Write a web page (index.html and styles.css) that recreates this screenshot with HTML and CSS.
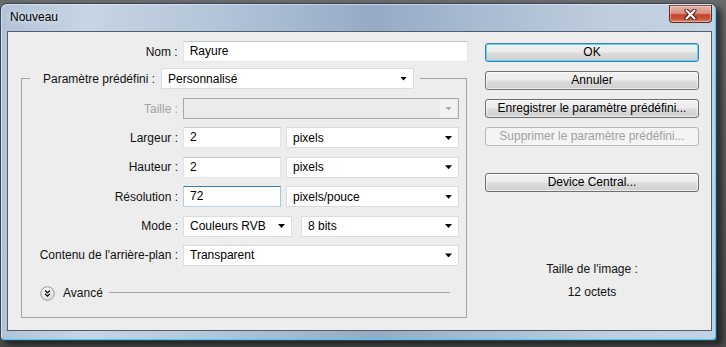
FILE: index.html
```html
<!DOCTYPE html>
<html lang="fr">
<head>
<meta charset="utf-8">
<title>Nouveau</title>
<link rel="stylesheet" href="styles.css">
</head>
<body>
<div class="screen">
  <div class="window">
    <div class="titlebar">
      <span class="title">Nouveau</span>
      <div class="close">
        <svg width="13" height="11" viewBox="0 0 13 11">
          <path d="M2.5 1.5 L10.5 9.5 M10.5 1.5 L2.5 9.5" stroke="#3a1a14" stroke-width="4" stroke-linecap="round"/>
          <path d="M2.5 1.5 L10.5 9.5 M10.5 1.5 L2.5 9.5" stroke="#fff" stroke-width="2.2" stroke-linecap="round"/>
        </svg>
      </div>
    </div>
    <div class="client">
      <div class="left">
        <div class="row nom-row">
          <span class="lbl">Nom :</span>
          <div class="input w-nom">Rayure</div>
        </div>
        <fieldset class="group">
          <legend class="legend">
            <span class="lbl-inline">Paramètre prédéfini :</span>
            <div class="select w-preset"><span>Personnalisé</span><i class="arrow"></i></div>
          </legend>
          <div class="rows">
            <div class="row">
              <span class="lbl disabled">Taille :</span>
              <div class="select disabled-select w-full"><span></span><b class="arrow-box"><i class="arrow grey"></i></b></div>
            </div>
            <div class="row">
              <span class="lbl">Largeur :</span>
              <div class="input w-num">2</div>
              <div class="select w-unit"><span>pixels</span><i class="arrow"></i></div>
            </div>
            <div class="row">
              <span class="lbl">Hauteur :</span>
              <div class="input w-num">2</div>
              <div class="select w-unit"><span>pixels</span><i class="arrow"></i></div>
            </div>
            <div class="row">
              <span class="lbl">Résolution :</span>
              <div class="input focus w-num">72</div>
              <div class="select w-unit"><span>pixels/pouce</span><i class="arrow"></i></div>
            </div>
            <div class="row">
              <span class="lbl">Mode :</span>
              <div class="select w-mode"><span>Couleurs RVB</span><i class="arrow"></i></div>
              <div class="select w-bits"><span>8 bits</span><i class="arrow"></i></div>
            </div>
            <div class="row">
              <span class="lbl">Contenu de l'arrière-plan :</span>
              <div class="select w-full"><span>Transparent</span><i class="arrow"></i></div>
            </div>
          </div>
          <div class="advanced">
            <span class="adv-icon">
              <svg width="15" height="15" viewBox="0 0 15 15">
                <defs>
                  <radialGradient id="g" cx="45%" cy="35%" r="70%">
                    <stop offset="0" stop-color="#ffffff"/>
                    <stop offset="1" stop-color="#d6d6d6"/>
                  </radialGradient>
                </defs>
                <circle cx="7.5" cy="7.5" r="6.8" fill="url(#g)" stroke="#9c9c9c" stroke-width="1"/>
                <path d="M5 4.5 L7.5 6.8 L10 4.5 M5 7.8 L7.5 10.1 L10 7.8" fill="none" stroke="#111" stroke-width="1.3"/>
              </svg>
            </span>
            <span class="adv-text">Avancé</span>
            <span class="adv-line"></span>
          </div>
        </fieldset>
      </div>
      <div class="right">
        <div class="btn default">OK</div>
        <div class="btn">Annuler</div>
        <div class="btn">Enregistrer le paramètre prédéfini...</div>
        <div class="btn btn-disabled">Supprimer le paramètre prédéfini...</div>
        <div class="btn btn-device">Device Central...</div>
        <div class="info">
          <div>Taille de l'image :</div>
          <div>12 octets</div>
        </div>
      </div>
    </div>
  </div>
</div>
</body>
</html>
```
FILE: styles.css
```css
* { box-sizing: border-box; }

body {
  margin: 0;
  width: 726px;
  height: 347px;
  overflow: hidden;
  background: linear-gradient(to bottom, #6b6b6b, #4a4a4a);
  font: 12px "Liberation Sans", Arial, sans-serif;
  color: #000;
}

.screen { padding-top: 3px; }

.window {
  width: 717px;
  height: 338px;
  border: 1px solid #34455a;
  border-radius: 7px 7px 4px 4px;
  background: linear-gradient(to right, #b2c3d7 0%, #c7d5e4 12%, #b3c5d9 30%, #95abc5 52%, #a9bcd2 68%, #bfcede 85%, #c4d2e1 100%);
  box-shadow: inset -1px -1px 0 #3ccff7, inset 1px 1px 0 rgba(255,255,255,0.45), 5px 4px 6px rgba(0,0,0,0.55);
  display: flex;
  flex-direction: column;
}

.titlebar {
  height: 27px;
  display: flex;
  align-items: flex-start;
  padding: 0 4px 0 9px;
}

.title {
  line-height: 27px;
  font-size: 12px;
  color: #000;
  text-shadow: 0 0 6px rgba(255,255,255,0.9);
}

.close {
  margin-left: auto;
  margin-top: 1px;
  width: 43px;
  height: 18px;
  border: 1px solid #5b2d24;
  border-top-color: #7a5048;
  border-radius: 0 0 4px 4px;
  background: linear-gradient(to bottom, #e7b0a3 0%, #d99482 45%, #c3442b 55%, #c9543a 80%, #e08a6e 100%);
  box-shadow: inset 0 0 0 1px rgba(255,255,255,0.35);
  display: flex;
  align-items: center;
  justify-content: center;
}

.client {
  margin: 0 4px 0 6px;
  height: 300px;
  border: 1px solid #4f5e6e;
  background: #ededed;
  display: flex;
  padding-top: 9px;
}

/* left side */
.left {
  margin-left: 13px;
  width: 447px;
  display: flex;
  flex-direction: column;
}

.row {
  display: flex;
  align-items: center;
  height: 21px;
}

.lbl {
  width: 156px;
  margin-right: 5px;
  text-align: right;
  white-space: nowrap;
  color: #111;
}

.nom-row .lbl { width: 157px; }

.lbl.disabled { color: #a3a3a3; }

.input {
  height: 21px;
  background: #fff;
  border: 1px solid;
  border-color: #c5c7cc #e0e3e8 #e5e9ee #e0e3e8;
  padding-left: 6px;
  line-height: 19px;
  white-space: nowrap;
}

.input.focus {
  border-color: #3d7bad #a4c9e3 #b7d9ed #b5cfe7;
}

.select {
  height: 21px;
  background: #fff;
  border: 1px solid #dcdcdc;
  display: flex;
  align-items: center;
  padding-left: 6px;
  white-space: nowrap;
}

.select span { flex: 1; }

.arrow {
  display: block;
  width: 7px;
  height: 4px;
  background: #000;
  clip-path: polygon(0 0, 100% 0, 50% 100%);
  margin-right: 6px;
}

.arrow.grey { background: #a8a8a8; margin: 0; }

.disabled-select {
  background: #ebebeb;
  border-color: #a9a9a9;
  padding-right: 1px;
}

.arrow-box {
  width: 17px;
  height: 17px;
  background: #f2f2f2;
  display: flex;
  align-items: center;
  justify-content: center;
}

.w-nom { width: 286px; }
.w-preset { width: 253px; }
.w-full { width: 276px; }
.w-num { width: 98px; }
.w-unit { width: 173px; margin-left: 5px; }
.w-mode { width: 109px; }
.w-bits { width: 158px; margin-left: 9px; }

.group {
  margin: 6px 0 0 0;
  padding: 0 7px 16px 0;
  width: 446px;
  border: 1px solid #a3a3a3;
  min-width: 0;
}

.legend {
  margin: 0 0 -5px 8px;
  padding: 0 6px 0 13px;
  display: flex;
  align-items: center;
  height: 21px;
}

.lbl-inline { margin-right: 6px; color: #111; }

.rows {
  display: flex;
  flex-direction: column;
  gap: 8.4px;
  padding-top: 14px;
}

.advanced {
  display: flex;
  align-items: center;
  height: 15px;
  margin-top: 20px;
  padding-left: 18px;
  padding-right: 9px;
}

.adv-icon { display: block; width: 15px; height: 15px; }
.adv-icon svg { display: block; }

.adv-text { margin-left: 8px; color: #111; }

.adv-line {
  flex: 1;
  margin-left: 6px;
  border-top: 1px solid #a3a3a3;
  height: 0;
  margin-top: -1px;
}

/* right side */
.right {
  margin-left: 17px;
  width: 214px;
  padding-top: 2px;
  display: flex;
  flex-direction: column;
  gap: 9px;
}

.btn {
  height: 19px;
  border: 1px solid #707070;
  border-radius: 3px;
  background: linear-gradient(to bottom, #f2f2f2 0%, #ebebeb 48%, #dddddd 52%, #cfcfcf 100%);
  box-shadow: inset 0 0 0 1px rgba(255,255,255,0.6);
  text-align: center;
  line-height: 17px;
  white-space: nowrap;
  color: #000;
}

.btn.default {
  border-color: #3c7fb1;
  box-shadow: inset 0 0 0 1px #5fd3f5;
}

.btn-disabled {
  border-color: #b5b8ba;
  background: #f4f4f4;
  box-shadow: none;
  color: #a0a0a0;
}

.btn-device { margin-top: 18px; }

.info {
  margin-top: 57px;
  text-align: center;
  line-height: 23px;
  color: #111;
}
```
